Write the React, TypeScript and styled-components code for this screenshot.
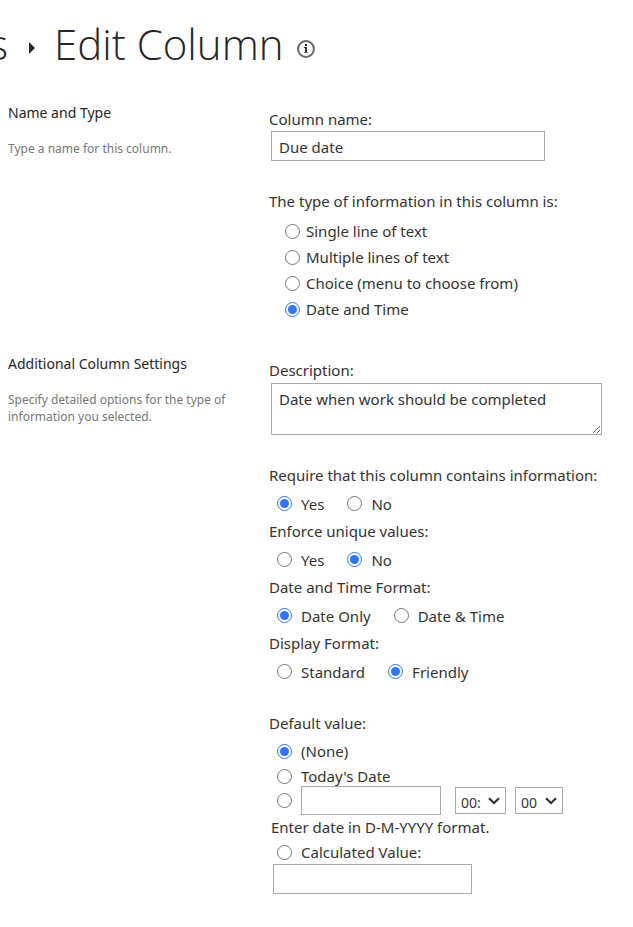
import React, { useState } from "react";
import styled, { createGlobalStyle } from "styled-components";

const GlobalStyle = createGlobalStyle`
  *, *::before, *::after { box-sizing: border-box; }
  body {
    margin: 0;
    height: 100vh;
    overflow: hidden;
    background: #fff;
    color: #333;
    font-family: "Noto Sans", "Open Sans", sans-serif;
    font-size: 15px;
    line-height: 20px;
  }
`;

const Page = styled.main`
  height: 100vh;
  overflow: hidden;
`;

const TitleBar = styled.header`
  display: flex;
  align-items: center;
  height: 88px;
  color: #262626;
  font-family: "Open Sans", "Noto Sans", sans-serif;
  font-size: 42px;
  font-weight: 300;
  line-height: 86px;
`;

const Crumb = styled.a`
  display: flex;
  justify-content: flex-end;
  width: 8px;
  color: inherit;
  text-decoration: none;
`;

const Arrow = styled.svg`
  margin: 8px 18px 0 20px;
`;

const Title = styled.h1`
  margin: 0;
  font: inherit;
`;

const InfoButton = styled.button`
  display: flex;
  margin: 10px 0 0 13px;
  padding: 0;
  border: 0;
  background: none;
`;

const Section = styled.section`
  display: grid;
  grid-template-columns: 261px 1fr;
  padding: 15px 8px 20px;
`;

const SectionTitle = styled.h2`
  margin: 0 0 17px;
  color: #262626;
  font-size: 14px;
  font-weight: 400;
  line-height: 20px;
`;

const Hint = styled.p`
  margin: 0;
  padding-right: 24px;
  color: #777;
  font-size: 12px;
  line-height: 17px;
`;

const Fields = styled.div`
  display: flex;
  flex-direction: column;
  align-items: flex-start;
  padding-top: 5px;
`;

const Label = styled.label`
  line-height: 22px;
`;

const TextBox = styled.input<{ $width: number }>`
  width: ${(p) => p.$width}px;
  max-width: 100%;
  height: 30px;
  padding: 2px 7px 0;
  border: 1px solid #ababab;
  background: #fff;
  color: #333;
  font: inherit;
`;

const TextArea = styled.textarea`
  display: block;
  width: 331px;
  height: 52px;
  margin: 2px 0 29px 2px;
  padding: 5px 7px;
  border: 1px solid #ababab;
  color: #333;
  font: inherit;
`;

const Group = styled.fieldset`
  min-width: 0;
  margin: 0;
  padding: 0;
  border: 0;
`;

const Legend = styled.legend`
  padding: 0;
  line-height: 22px;
`;

const TypeList = styled.div`
  display: flex;
  flex-direction: column;
  gap: 6px;
  padding: 9px 0 0 16px;
`;

const Options = styled.div`
  display: flex;
  gap: 23px;
  height: 34px;
  padding: 1px 0 0 8px;
`;

const Option = styled.label<{ $gap: number }>`
  display: flex;
  align-items: center;
  gap: ${(p) => p.$gap}px;
`;

const Radio = styled.input`
  flex: none;
  width: 15px;
  height: 15px;
  margin: 0;
  accent-color: #2f77ff;
`;

const DefaultList = styled.div`
  display: flex;
  flex-direction: column;
  padding: 7px 0 0 8px;
`;

const PresetList = styled.div`
  display: flex;
  flex-direction: column;
  gap: 5px;
`;

const DateRow = styled.div`
  display: flex;
  align-items: center;
`;

const DateBox = styled(TextBox)`
  height: 29px;
  margin: 0 14px 0 9px;
`;

const SelectWrap = styled.span`
  display: grid;
  align-items: center;
  margin-right: 9px;

  & > * {
    grid-area: 1 / 1;
  }
`;

const Chevron = styled.svg`
  justify-self: end;
  margin-right: 6px;
  pointer-events: none;
`;

const Select = styled.select<{ $width: number }>`
  appearance: none;
  width: ${(p) => p.$width}px;
  height: 27px;
  padding: 4px 0 0 5px;
  border: 1px solid #ababab;
  border-radius: 0;
  background: #fff;
  color: #333;
  font: inherit;
  font-size: 14px;
`;

const Note = styled.p`
  margin: 0 0 3px -6px;
  line-height: 24px;
`;

const FormulaRow = styled.div`
  margin: 2px 0 0 -4px;
`;

const NameRow = styled.div`
  margin: 1px 0 29px 2px;
`;

const DefaultGroup = styled(Group)`
  margin-top: 24px;
`;

const NextLink = styled.a`
  margin-top: 29px;
  color: #333;
  text-decoration: none;
  white-space: nowrap;
`;

function Choice({ name, value, current, onPick, gap = 9, label }: {
  name: string; value: string; current: string; onPick: (v: string) => void; gap?: number; label: string;
}) {
  return (
    <Option $gap={gap}>
      <Radio type="radio" name={name} checked={current === value} onChange={() => onPick(value)} />
      {label}
    </Option>
  );
}

function RadioGroup({ name, legend, options, initial }: {
  name: string; legend: string; options: string[]; initial: string;
}) {
  const [current, setCurrent] = useState(initial);
  return (
    <Group>
      <Legend>{legend}</Legend>
      <Options>
        {options.map((o) => (
          <Choice key={o} name={name} value={o} label={o} current={current} onPick={setCurrent} />
        ))}
      </Options>
    </Group>
  );
}

function TimeSelect({ label, width, value }: { label: string; width: number; value: string }) {
  return (
    <SelectWrap>
      <Select $width={width} aria-label={label}>
        <option>{value}</option>
      </Select>
      <Chevron width="12" height="8" viewBox="0 0 12 8" aria-hidden="true">
        <path d="M1 1.2L6 6L11 1.2" fill="none" stroke="#333" strokeWidth="2.2" />
      </Chevron>
    </SelectWrap>
  );
}

const types = ["Single line of text", "Multiple lines of text", "Choice (menu to choose from)", "Date and Time"];

export default function App() {
  const [type, setType] = useState("Date and Time");
  const [preset, setPreset] = useState("none");
  return (
    <>
      <GlobalStyle />
      <Page>
        <TitleBar>
          <Crumb href="#settings">s</Crumb>
          <Arrow width="8" height="12" viewBox="0 0 8 12" aria-hidden="true">
            <path d="M1 0L7 6L1 12Z" fill="#262626" />
          </Arrow>
          <Title>Edit Column</Title>
          <InfoButton type="button" aria-label="Page information">
            <svg width="18" height="18" viewBox="0 0 18 18">
              <circle cx="9" cy="9" r="7.9" fill="none" stroke="#666" strokeWidth="2" />
              <path d="M8 4h2v2H8zM7 7h3v6H8V8H7z" fill="#333" />
              <path d="M7 12h4v1H7z" fill="#777" />
            </svg>
          </InfoButton>
        </TitleBar>

        <Section>
          <div>
            <SectionTitle>Name and Type</SectionTitle>
            <Hint>Type a name for this column.</Hint>
          </div>
          <Fields>
            <Label htmlFor="name">Column name:</Label>
            <NameRow>
              <TextBox id="name" $width={274} defaultValue="Due date" />
            </NameRow>
            <Group>
              <Legend>The type of information in this column is:</Legend>
              <TypeList>
                {types.map((t) => (
                  <Choice key={t} name="type" value={t} label={t} gap={6} current={type} onPick={setType} />
                ))}
              </TypeList>
            </Group>
          </Fields>
        </Section>

        <Section>
          <div>
            <SectionTitle>Additional Column Settings</SectionTitle>
            <Hint>Specify detailed options for the type of information you selected.</Hint>
          </div>
          <Fields>
            <Label htmlFor="description">Description:</Label>
            <TextArea id="description" defaultValue="Date when work should be completed" />
            <RadioGroup name="required" legend="Require that this column contains information:" options={["Yes", "No"]} initial="Yes" />
            <RadioGroup name="unique" legend="Enforce unique values:" options={["Yes", "No"]} initial="No" />
            <RadioGroup name="format" legend="Date and Time Format:" options={["Date Only", "Date & Time"]} initial="Date Only" />
            <RadioGroup name="display" legend="Display Format:" options={["Standard", "Friendly"]} initial="Friendly" />
            <DefaultGroup>
              <Legend>Default value:</Legend>
              <DefaultList>
                <PresetList>
                  <Choice name="default" value="none" label="(None)" current={preset} onPick={setPreset} />
                  <Choice name="default" value="today" label="Today's Date" current={preset} onPick={setPreset} />
                </PresetList>
                <DateRow>
                  <Radio type="radio" name="default" aria-label="Specific date" checked={preset === "date"} onChange={() => setPreset("date")} />
                  <DateBox $width={140} aria-label="Default date" />
                  <TimeSelect label="Hour" width={51} value="00:" />
                  <TimeSelect label="Minute" width={48} value="00" />
                </DateRow>
                <Note>Enter date in D-M-YYYY format.</Note>
                <Choice name="default" value="formula" label="Calculated Value:" current={preset} onPick={setPreset} />
                <FormulaRow>
                  <TextBox $width={199} aria-label="Formula" />
                </FormulaRow>
              </DefaultList>
            </DefaultGroup>
            <NextLink href="#formatting">Column Formatting</NextLink>
          </Fields>
        </Section>
      </Page>
    </>
  );
}
